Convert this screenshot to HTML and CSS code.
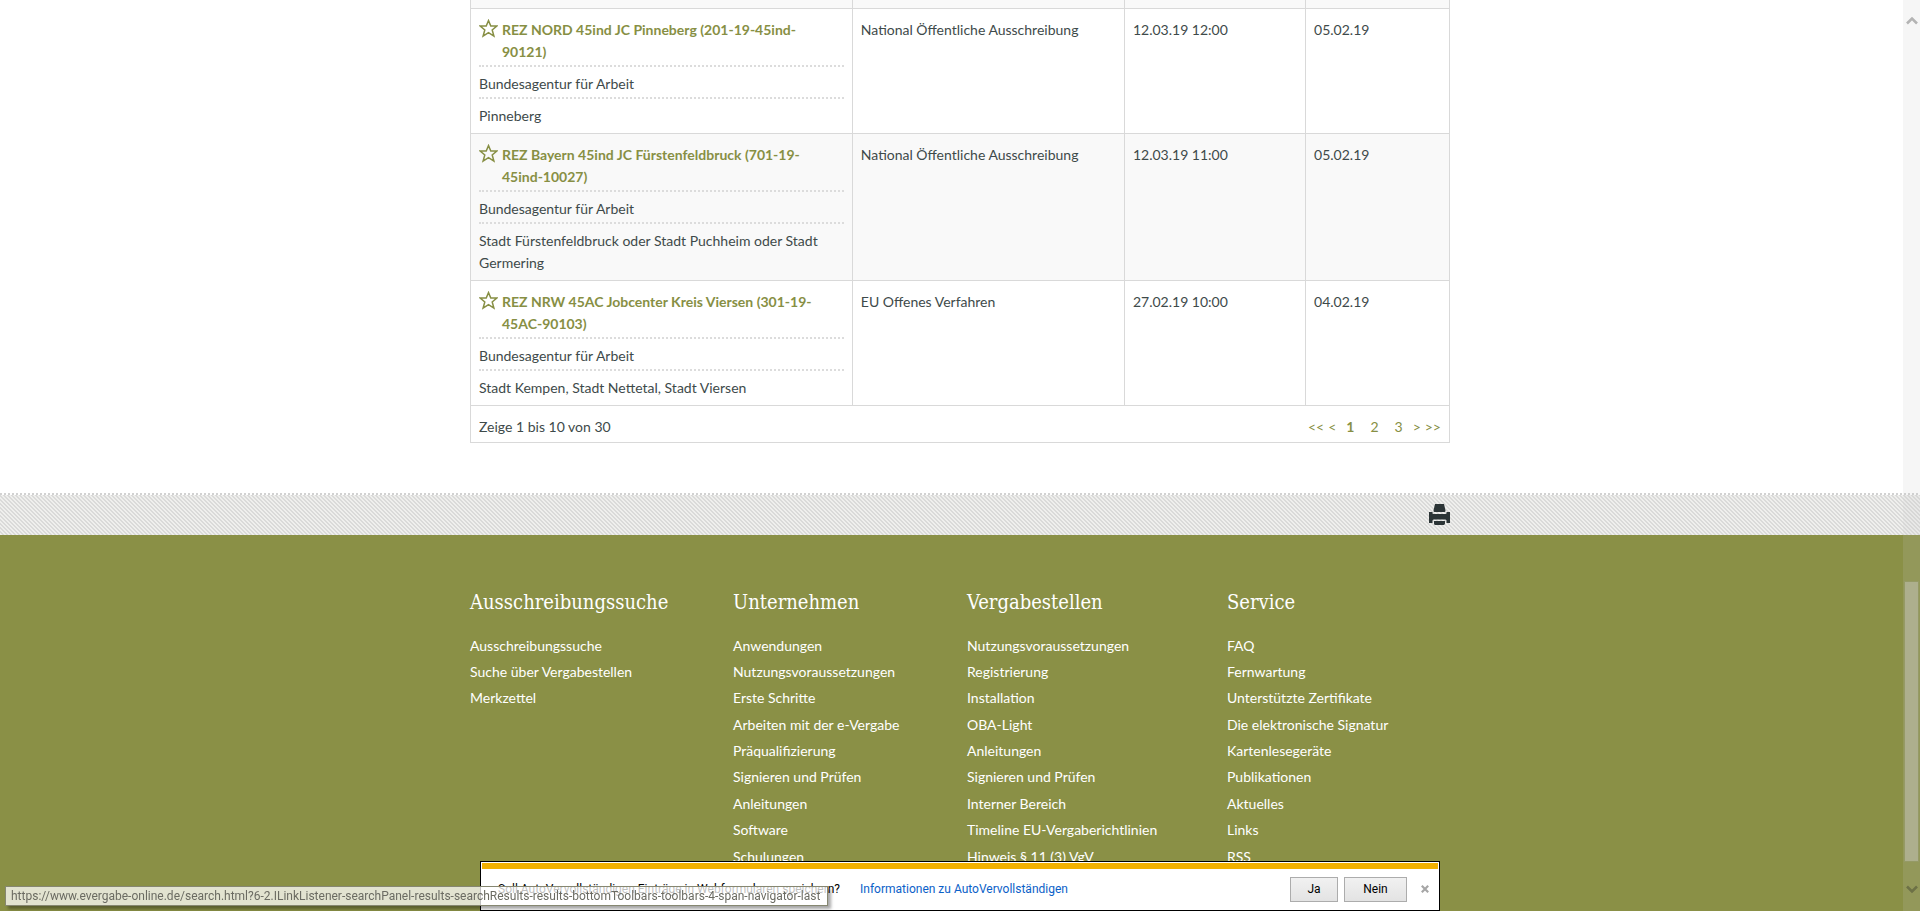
FILE: index.html
```html
<!DOCTYPE html>
<html lang="de">
<head>
<meta charset="utf-8">
<title>Ausschreibungssuche</title>
<link rel="stylesheet" href="styles.css">
</head>
<body>
<svg class="defs" aria-hidden="true">
  <symbol id="star" viewBox="0 0 19 19"><path d="M9.5 1.6 11.8 7H17.8L13.2 10.9 14.9 17.1 9.5 13.7 4.1 17.1 5.8 10.9 1.2 7H7.2Z" fill="none" stroke="currentColor" stroke-width="1.5"/></symbol>
</svg>
<main class="container">
  <table class="results">
    <colgroup><col class="c-title"><col class="c-type"><col class="c-due"><col class="c-date"></colgroup>
    <tbody>
      <tr class="prev"><td></td><td></td><td></td><td></td></tr>
      <tr>
        <td>
          <div class="entry title"><svg class="star"><use href="#star"/></svg><a href="#">REZ NORD 45ind JC Pinneberg (201-19-45ind-<br>90121)</a></div>
          <div class="entry">Bundesagentur für Arbeit</div>
          <div class="entry">Pinneberg</div>
        </td>
        <td>National Öffentliche Ausschreibung</td><td>12.03.19 12:00</td><td>05.02.19</td>
      </tr>
      <tr class="even">
        <td>
          <div class="entry title"><svg class="star"><use href="#star"/></svg><a href="#">REZ Bayern 45ind JC Fürstenfeldbruck (701-19-<br>45ind-10027)</a></div>
          <div class="entry">Bundesagentur für Arbeit</div>
          <div class="entry">Stadt Fürstenfeldbruck oder Stadt Puchheim oder Stadt<br>Germering</div>
        </td>
        <td>National Öffentliche Ausschreibung</td><td>12.03.19 11:00</td><td>05.02.19</td>
      </tr>
      <tr>
        <td>
          <div class="entry title"><svg class="star"><use href="#star"/></svg><a href="#">REZ NRW 45AC Jobcenter Kreis Viersen (301-19-<br>45AC-90103)</a></div>
          <div class="entry">Bundesagentur für Arbeit</div>
          <div class="entry">Stadt Kempen, Stadt Nettetal, Stadt Viersen</div>
        </td>
        <td>EU Offenes Verfahren</td><td>27.02.19 10:00</td><td>04.02.19</td>
      </tr>
    </tbody>
    <tfoot>
      <tr><td colspan="4">
        <div class="toolbar">
          <span>Zeige 1 bis 10 von 30</span>
          <nav class="pager" aria-label="Seiten">
            <a href="#">&lt;&lt;</a><a href="#">&lt;</a><a class="num current" href="#">1</a><a class="num" href="#">2</a><a class="num" href="#">3</a><a href="#">&gt;</a><a href="#">&gt;&gt;</a>
          </nav>
        </div>
      </td></tr>
    </tfoot>
  </table>
</main>
<div class="band">
  <div class="container tools">
    <button class="print" aria-label="Drucken"><svg viewBox="0 0 21 21" width="21" height="21"><path fill="#2b3436" d="M6 0h9l1.500 6.500q0 1.500-1 1.500H5.500q-1 0-1-1.500ZM0 8h3.500v1.500Q4 10 5 10h11q1 0 1.500-.5V8H21v11h-3.500v-2.500Q17 15.500 16 15.500H5q-1 0-1.500 1V19H0ZM5 17h11v2.500Q15.500 21 14.500 21h-8Q5 21 5 19.500Z"/></svg></button>
  </div>
</div>
<footer class="footer">
  <div class="container columns">
    <section><h2>Ausschreibungssuche</h2><ul>
      <li><a href="#">Ausschreibungssuche</a></li><li><a href="#">Suche über Vergabestellen</a></li><li><a href="#">Merkzettel</a></li></ul></section>
    <section><h2>Unternehmen</h2><ul>
      <li><a href="#">Anwendungen</a></li><li><a href="#">Nutzungsvoraussetzungen</a></li><li><a href="#">Erste Schritte</a></li><li><a href="#">Arbeiten mit der e-Vergabe</a></li><li><a href="#">Präqualifizierung</a></li><li><a href="#">Signieren und Prüfen</a></li><li><a href="#">Anleitungen</a></li><li><a href="#">Software</a></li><li><a href="#">Schulungen</a></li></ul></section>
    <section><h2>Vergabestellen</h2><ul>
      <li><a href="#">Nutzungsvoraussetzungen</a></li><li><a href="#">Registrierung</a></li><li><a href="#">Installation</a></li><li><a href="#">OBA-Light</a></li><li><a href="#">Anleitungen</a></li><li><a href="#">Signieren und Prüfen</a></li><li><a href="#">Interner Bereich</a></li><li><a href="#">Timeline EU-Vergaberichtlinien</a></li><li><a href="#">Hinweis § 11 (3) VgV</a></li></ul></section>
    <section><h2>Service</h2><ul>
      <li><a href="#">FAQ</a></li><li><a href="#">Fernwartung</a></li><li><a href="#">Unterstützte Zertifikate</a></li><li><a href="#">Die elektronische Signatur</a></li><li><a href="#">Kartenlesegeräte</a></li><li><a href="#">Publikationen</a></li><li><a href="#">Aktuelles</a></li><li><a href="#">Links</a></li><li><a href="#">RSS</a></li></ul></section>
  </div>
</footer>
<div class="notice" role="dialog" aria-label="AutoVervollständigen">
  <div class="notice-stripe"></div>
  <div class="notice-body">
    <span>Soll AutoVervollständigen Einträge in Webformularen speichern?</span>
    <a href="#">Informationen zu AutoVervollständigen</a>
    <div class="notice-actions"><button class="yes">Ja</button><button class="no">Nein</button><button class="close" aria-label="Schließen"><svg width="8" height="8" viewBox="0 0 8 8"><path d="M.8.8 7.200 7.200M7.200.8.8 7.200" stroke="#a6a6a6" stroke-width="2.200"/></svg></button></div>
  </div>
</div>
<div class="status">https://www.evergabe-online.de/search.html?6-2.ILinkListener-searchPanel-results-searchResults-results-bottomToolbars-toolbars-4-span-navigator-last</div>
<div class="scrollbar" aria-hidden="true">
  <svg width="12" height="9" viewBox="0 0 12 9"><path d="M1 7.500 6 2.500 11 7.500" fill="none" stroke="#b4b4b4" stroke-width="2.600"/></svg>
  <div class="thumb"></div>
  <svg width="12" height="9" viewBox="0 0 12 9"><path d="M1 1.500 6 6.500 11 1.500" fill="none" stroke="#6d7146" stroke-width="2.600"/></svg>
</div>
</body>
</html>
```
FILE: styles.css
```css
* { box-sizing: border-box; }
html, body { height: 100%; }
body {
  margin: 0;
  display: flex;
  flex-direction: column;
  overflow: hidden;
  background: #fff;
  color: #3e4a4a;
  font: 14px/22px Lato, "Open Sans", sans-serif;
}
a { color: inherit; text-decoration: none; }
button { font: inherit; padding: 0; }
.defs { display: none; }
.container { width: 100%; max-width: 980px; margin: 0 auto; }

.results { width: 100%; border-collapse: collapse; table-layout: fixed; }
.c-title { width: 39%; }
.c-type { width: 27.8%; }
.c-due { width: 18.5%; }
.c-date { width: 14.7%; }
.results td {
  border: 1px solid #d9d9d9;
  padding: 10px 8px 6px;
  vertical-align: top;
}
.results .prev td { height: 8px; padding: 0; border-top: 0; background: #f9f9f9; }
.even td { background: #f9f9f9; }
.entry { padding-bottom: 2px; }
.entry + .entry { padding-top: 6px; border-top: 2px dotted #dcdcdc; }
.entry:last-child { padding-bottom: 0; }
.title { display: flex; gap: 4px; color: #878f44; font-weight: 700; }
.star { width: 19px; height: 19px; flex: none; }
.results tfoot td { padding-bottom: 4px; }
.toolbar { display: flex; justify-content: space-between; }
.pager { display: flex; gap: 4px; color: #878f44; }
.num { padding: 0 6px; }
.current { font-weight: 700; }

.band {
  margin-top: 50px;
  padding-top: 2px;
  background:
    repeating-linear-gradient(90deg, #d2d2d2 0 2px, #fff 2px 4px) top / 100% 2px no-repeat,
    linear-gradient(45deg, #dadad9 25%, #efefed 25% 50%, #dadad9 50% 75%, #efefed 75%) 0 0 / 4px 4px;
}
.tools { display: flex; justify-content: flex-end; padding: 9px 0 10px; }
.print { border: 0; background: none; width: 21px; height: 21px; }
.print svg { display: block; }

.footer { flex: 1; background: #8a9046; color: #fff; padding-top: 54px; }
.columns { display: grid; grid-template-columns: 263fr 234fr 260fr 223fr; }
.columns h2 { margin: 0 0 20px; font: 400 20px/26px "DejaVu Serif Condensed", "DejaVu Serif", serif; }
.columns ul {
  list-style: none;
  margin: 0;
  padding: 0;
  height: 233px;
  display: grid;
  grid-template-rows: repeat(9, 22px);
  align-content: space-between;
}

.notice {
  position: fixed;
  bottom: 0;
  left: 25%;
  right: 25%;
  padding: 1px;
  border: 1px solid #000;
  background: #fff;
  color: #000;
  font: 12px/16px Roboto, "Open Sans", sans-serif;
}
.notice-stripe { height: 6px; background: #f2b100; }
.notice-body { display: flex; align-items: center; gap: 20px; height: 40px; padding: 0 1px 0 16px; white-space: nowrap; }
.notice-body a { color: #0b61c8; }
.notice-actions { display: flex; align-items: center; gap: 6px; margin-left: auto; }
.notice-actions button { height: 25px; border: 1px solid #acacac; background: linear-gradient(#f1f1f1, #e3e3e3); color: #000; }
.notice-actions .yes { width: 48px; }
.notice-actions .no { width: 63px; }
.notice-actions .close { border: 0; background: none; width: 24px; }

.status {
  position: fixed;
  left: 5px;
  bottom: 5px;
  height: 20px;
  padding: 0 7px 0 5px;
  border: 1px solid #868771;
  background: rgba(255, 255, 255, .75);
  box-shadow: 3px 3px 3px rgba(0, 0, 0, .35);
  color: #6b6b62;
  font: 12px/18px Roboto, "Open Sans", sans-serif;
  white-space: nowrap;
}

.scrollbar {
  position: fixed;
  top: 0;
  right: 0;
  bottom: 0;
  width: 17px;
  padding: 16px 0 17px;
  display: flex;
  flex-direction: column;
  align-items: center;
  background: rgba(200, 200, 200, .16);
}
.thumb { width: 15px; height: 32%; margin: auto 0 23px; background: rgba(205, 205, 205, .45); border: 1px solid #959a66; }
```
